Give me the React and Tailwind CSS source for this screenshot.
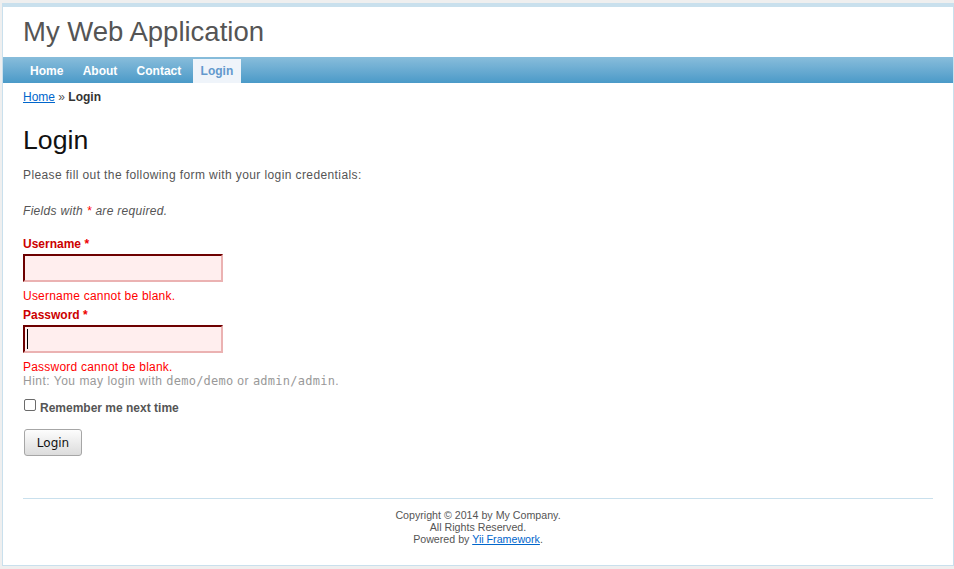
import React from 'react';

const sans = { fontFamily: '"Liberation Sans", Arial, sans-serif' };
const mono = { fontFamily: '"DejaVu Sans Mono", monospace' };

const menuItems = [
    { label: 'Home' },
    { label: 'About' },
    { label: 'Contact' },
    { label: 'Login', active: true },
];

const ErrorField = ({ label, message, caret }) => (
    <div>
        <label className="block text-[12px] leading-[18px] font-bold text-[#cc0000]">
            {label} <span className="text-[#ee0000]">*</span>
        </label>
        <div className="relative mt-[1px] w-[200px] h-[28px] bg-[#ffeeee] border-2 border-t-[#6d0000] border-l-[#6d0000] border-b-[#ebb2b2] border-r-[#ebb2b2]">
            {caret && <span className="absolute left-[2px] top-[2px] w-px h-[20px] bg-black" />}
        </div>
        <div className="mt-[7px] text-[12px] leading-[14px] tracking-[0.22px] text-[#ff0000]">{message}</div>
    </div>
);

export default function App() {
    return (
        <div className="min-h-[569px] bg-[#efefef] pt-[3px] pl-[2px]" style={sans}>
            <div className="w-[952px] bg-white border border-[#c9e0ed] border-t-4 text-[#555]">
                {/* header */}
                <div className="h-[50px] px-[20px] pt-[10px] text-[27.5px] leading-[30px] text-[#555]">
                    My Web Application
                </div>

                {/* main menu */}
                <div className="h-[26px] bg-gradient-to-b from-[#88bddb] to-[#4a9ac8] pl-[19px] flex items-end gap-[3.3px]">
                    {menuItems.map((item) => (
                        <a
                            key={item.label}
                            className={
                                'h-[24px] px-[8px] flex items-center text-[12px] font-bold ' +
                                (item.active ? 'bg-[#eff4fa] text-[#6399cd]' : 'text-white')
                            }
                        >
                            {item.label}
                        </a>
                    ))}
                </div>

                {/* breadcrumbs */}
                <div className="px-[20px] py-[5px] text-[12px] leading-[18px] text-[#555]">
                    <a className="text-[#0066cc] underline">Home</a> &raquo; <span className="font-bold text-[#333]">Login</span>
                </div>

                {/* content */}
                <div className="px-[20px]">
                    <h1 className="mt-[14px] text-[26.67px] leading-[30px] text-[#111]">Login</h1>
                    <p className="mt-[11px] text-[12px] leading-[18px] tracking-[0.4px]">
                        Please fill out the following form with your login credentials:
                    </p>
                    <p className="mt-[18px] text-[12px] leading-[18px] tracking-[0.31px] italic">
                        Fields with <span className="text-[#ff0000]">*</span> are required.
                    </p>

                    <div className="mt-[15px]">
                        <ErrorField label="Username" message="Username cannot be blank." />
                    </div>
                    <div className="mt-[3px]">
                        <ErrorField label="Password" message="Password cannot be blank." caret />
                    </div>
                    <div className="text-[12px] leading-[14px] tracking-[0.5px] text-[#999]">
                        Hint: You may login with{' '}
                        <span className="tracking-[0.25px]" style={mono}>demo/demo</span> or{' '}
                        <span className="tracking-[0.25px]" style={mono}>admin/admin</span>.
                    </div>

                    <div className="flex items-start">
                        <span className="mt-[11px] ml-[1px] w-[12px] h-[12px] border border-[#6b6b6b] rounded-[2px] bg-white" />
                        <span className="ml-[4px] mt-[13px] text-[12px] leading-[14px] font-bold text-[#555]">
                            Remember me next time
                        </span>
                    </div>

                    <div className="mt-[14px]">
                        <button
                            className="w-[58px] h-[27px] ml-[1px] rounded-[3px] border border-[#a6a6a6] bg-gradient-to-b from-[#fdfdfd] to-[#dcdcdc] text-[12px] text-[#111]"
                            style={{ fontFamily: '"DejaVu Sans", sans-serif' }}
                        >
                            Login
                        </button>
                    </div>
                </div>

                {/* footer */}
                <div className="mx-[20px] mt-[42px] mb-[10px] border-t border-[#c9e0ed] py-[10px] text-center text-[10.67px] leading-[12px] text-[#555]">
                    Copyright &copy; 2014 by My Company.<br />
                    All Rights Reserved.<br />
                    Powered by <a className="text-[#0066cc] underline">Yii Framework</a>.
                </div>
            </div>
        </div>
    );
}
